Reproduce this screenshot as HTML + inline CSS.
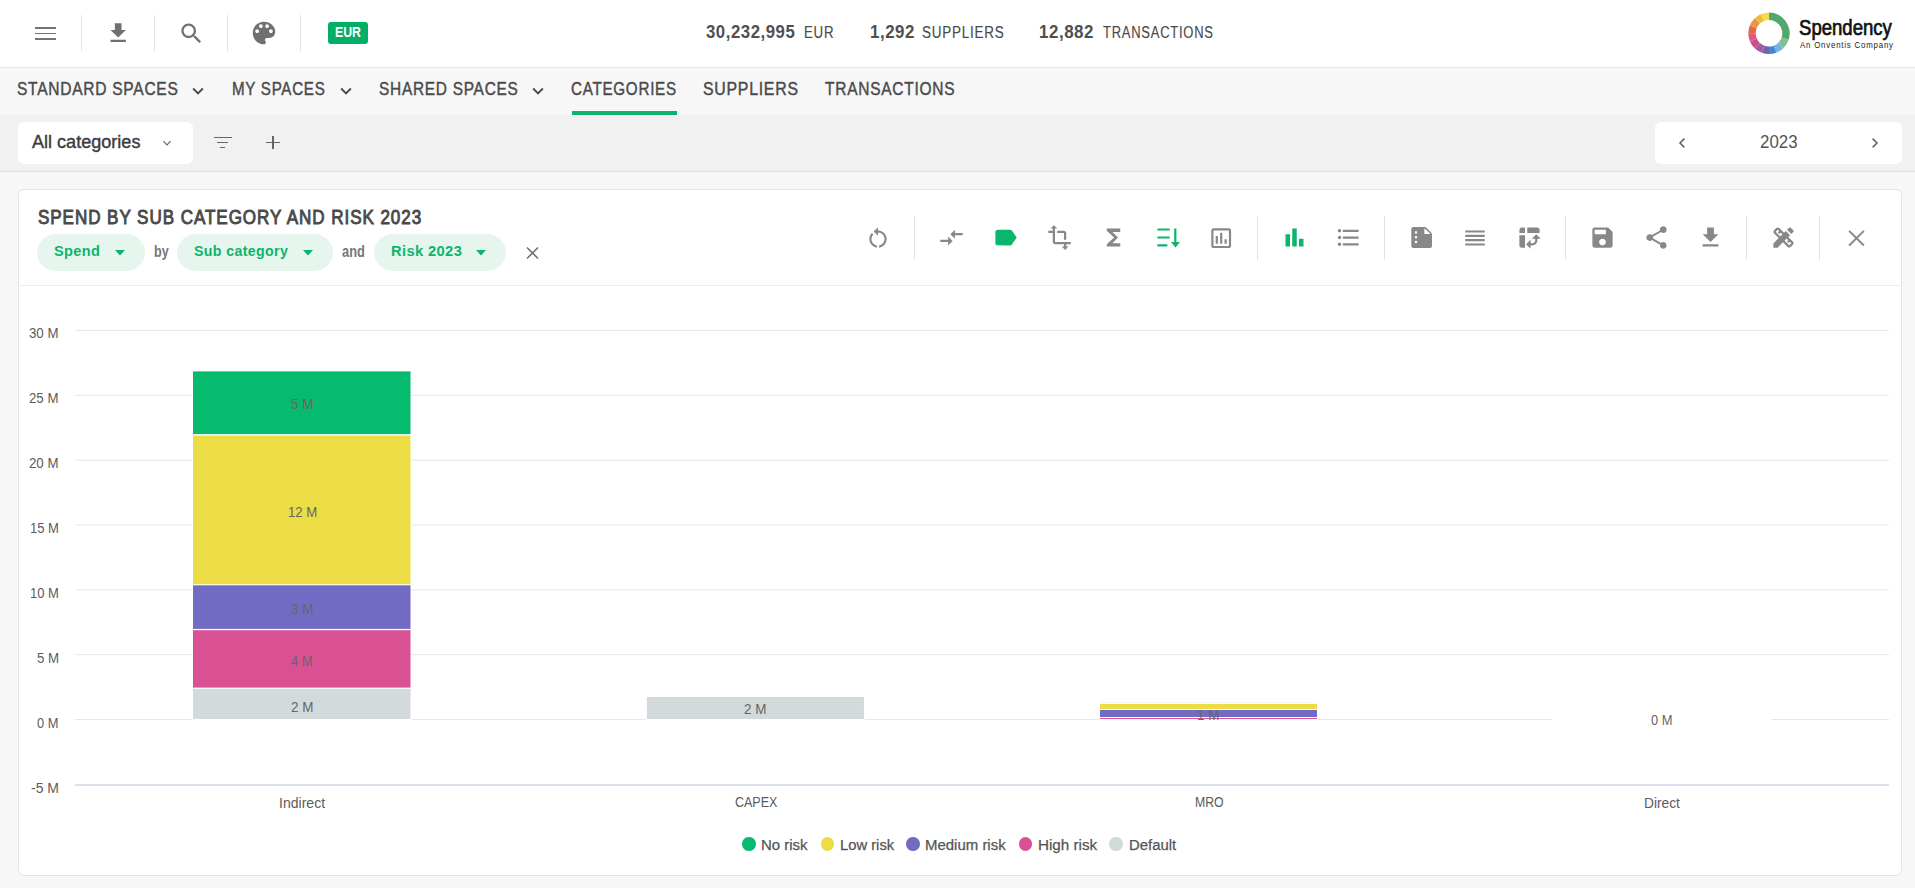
<!DOCTYPE html>
<html><head><meta charset="utf-8"><title>Spendency</title>
<style>
html,body{margin:0;padding:0;width:1915px;height:888px;overflow:hidden;background:#f5f5f5;}
body{position:relative;font-family:"Liberation Sans",sans-serif;}
.t{position:absolute;white-space:nowrap;transform-origin:0 0;}
.r{position:absolute;}
.i{position:absolute;overflow:visible;}

</style></head><body>
<div class="r" style="left:0px;top:0px;width:1915px;height:67px;background:#ffffff;"></div>
<div class="r" style="left:0px;top:67px;width:1915px;height:1px;background:#e6e6e6;"></div>
<div class="r" style="left:0px;top:68px;width:1915px;height:47px;background:#f7f7f7;"></div>
<div class="r" style="left:0px;top:115px;width:1915px;height:56px;background:#f1f1f1;"></div>
<div class="r" style="left:0px;top:171px;width:1915px;height:1px;background:#e2e2e2;"></div>
<div class="r" style="left:0px;top:172px;width:1915px;height:716px;background:#f7f7f7;"></div>
<div class="r" style="left:35.2px;top:27.1px;width:20.6px;height:1.8px;background:#737373;"></div>
<div class="r" style="left:35.2px;top:32.6px;width:20.6px;height:1.8px;background:#737373;"></div>
<div class="r" style="left:35.2px;top:38.1px;width:20.6px;height:1.8px;background:#737373;"></div>
<svg class="i" style="left:105.30px;top:20.30px;" width="26.4" height="26.4" viewBox="0 0 24 24"><path fill="#707070" d="M19 9h-4V3H9v6H5l7 7 7-7zM5 18v2h14v-2H5z"/></svg>
<svg class="i" style="left:177.50px;top:19.50px;" width="27" height="27" viewBox="0 0 24 24"><path fill="#707070" d="M15.5 14h-.79l-.28-.27C15.41 12.59 16 11.11 16 9.5 16 5.91 13.09 3 9.5 3S3 5.91 3 9.5 5.91 16 9.5 16c1.61 0 3.09-.59 4.23-1.57l.27.28v.79l5 4.99L20.49 19l-4.99-5zm-6 0C7.01 14 5 11.99 5 9.5S7.01 5 9.5 5 14 7.01 14 9.5 11.99 14 9.5 14z"/></svg>
<svg class="i" style="left:249.30px;top:18.20px;" width="30" height="30" viewBox="0 0 24 24"><path fill="#707070" d="M12 3c-4.97 0-9 4.03-9 9s4.03 9 9 9c.83 0 1.5-.67 1.5-1.5 0-.39-.15-.74-.39-1.01-.23-.26-.38-.61-.38-.99 0-.83.67-1.5 1.5-1.5H16c2.760 0 5-2.24 5-5 0-4.42-4.03-8-9-8zm-5.5 9c-.83 0-1.5-.67-1.5-1.5S5.67 9 6.5 9 8 9.67 8 10.5 7.330 12 6.5 12zm3-4C8.67 8 8 7.33 8 6.5S8.67 5 9.5 5s1.5.67 1.5 1.5S10.33 8 9.5 8zm5 0c-.83 0-1.5-.67-1.5-1.5S13.67 5 14.5 5s1.5.67 1.5 1.5S15.33 8 14.5 8zm3 4c-.83 0-1.5-.67-1.5-1.5S16.67 9 17.5 9s1.5.67 1.5 1.5-.67 1.5-1.5 1.5z"/></svg>
<div class="r" style="left:81px;top:15px;width:1px;height:36px;background:#e3e3e3;"></div>
<div class="r" style="left:154px;top:15px;width:1px;height:36px;background:#e3e3e3;"></div>
<div class="r" style="left:227px;top:15px;width:1px;height:36px;background:#e3e3e3;"></div>
<div class="r" style="left:300px;top:15px;width:1px;height:36px;background:#e3e3e3;"></div>
<div class="r" style="left:328px;top:22px;width:40px;height:22px;background:#03ae69;border-radius:3px;"></div>
<div class="t" style="left:335.20px;top:26.31px;font-size:13.81px;line-height:13.81px;color:#ffffff;font-weight:bold;transform:scaleX(0.8929);letter-spacing:0px;">EUR</div>
<div class="t" style="left:706.10px;top:21.88px;font-size:19.04px;line-height:19.04px;color:#505050;font-weight:bold;transform:scaleX(0.8821);letter-spacing:0.6px;">30,232,995</div>
<div class="t" style="left:804.20px;top:25.45px;font-size:15.77px;line-height:15.77px;color:#4a4a4a;transform:scaleX(0.8417);letter-spacing:0.9px;-webkit-text-stroke:0.15px #4a4a4a;">EUR</div>
<div class="t" style="left:870.20px;top:21.88px;font-size:19.04px;line-height:19.04px;color:#505050;font-weight:bold;transform:scaleX(0.8889);letter-spacing:0.6px;">1,292</div>
<div class="t" style="left:922.20px;top:25.45px;font-size:15.77px;line-height:15.77px;color:#4a4a4a;transform:scaleX(0.8528);letter-spacing:0.9px;-webkit-text-stroke:0.15px #4a4a4a;">SUPPLIERS</div>
<div class="t" style="left:1039.20px;top:21.88px;font-size:19.04px;line-height:19.04px;color:#505050;font-weight:bold;transform:scaleX(0.8905);letter-spacing:0.6px;">12,882</div>
<div class="t" style="left:1103.00px;top:25.45px;font-size:15.77px;line-height:15.77px;color:#4a4a4a;transform:scaleX(0.8243);letter-spacing:0.9px;-webkit-text-stroke:0.15px #4a4a4a;">TRANSACTIONS</div>
<svg class="i" style="left:0;top:0" width="1915" height="67"><path fill="#52a86b" d="M1769.00 12.60A20.7 20.7 0 0 1 1788.69 39.70L1781.65 37.41A13.3 13.3 0 0 0 1769.00 20.00Z"/><path fill="#80bf94" d="M1788.69 39.70A20.7 20.7 0 0 1 1783.38 48.19L1778.24 42.87A13.3 13.3 0 0 0 1781.65 37.41Z"/><path fill="#74b4e4" d="M1783.38 48.19A20.7 20.7 0 0 1 1776.42 52.63L1773.77 45.72A13.3 13.3 0 0 0 1778.24 42.87Z"/><path fill="#4187cc" d="M1776.42 52.63A20.7 20.7 0 0 1 1769.00 54.00L1769.00 46.60A13.3 13.3 0 0 0 1773.77 45.72Z"/><path fill="#6e64ad" d="M1769.00 54.00A20.7 20.7 0 0 1 1761.92 52.75L1764.45 45.80A13.3 13.3 0 0 0 1769.00 46.60Z"/><path fill="#a35aa0" d="M1761.92 52.75A20.7 20.7 0 0 1 1754.88 48.44L1759.93 43.03A13.3 13.3 0 0 0 1764.45 45.80Z"/><path fill="#cc4d8c" d="M1754.88 48.44A20.7 20.7 0 0 1 1749.95 41.39L1756.76 38.50A13.3 13.3 0 0 0 1759.93 43.03Z"/><path fill="#df5584" d="M1749.95 41.39A20.7 20.7 0 0 1 1748.30 33.30L1755.70 33.30A13.3 13.3 0 0 0 1756.76 38.50Z"/><path fill="#e06846" d="M1748.30 33.30A20.7 20.7 0 0 1 1749.81 25.55L1756.67 28.32A13.3 13.3 0 0 0 1755.70 33.30Z"/><path fill="#ec9645" d="M1749.81 25.55A20.7 20.7 0 0 1 1754.88 18.16L1759.93 23.57A13.3 13.3 0 0 0 1756.67 28.32Z"/><path fill="#ecbd3c" d="M1754.88 18.16A20.7 20.7 0 0 1 1761.25 14.11L1764.02 20.97A13.3 13.3 0 0 0 1759.93 23.57Z"/><path fill="#f2dd4a" d="M1761.25 14.11A20.7 20.7 0 0 1 1769.00 12.60L1769.00 20.00A13.3 13.3 0 0 0 1764.02 20.97Z"/></svg>
<div class="t" style="left:1799.20px;top:18.39px;font-size:21.51px;line-height:21.51px;color:#111111;transform:scaleX(0.8633);letter-spacing:0px;-webkit-text-stroke:0.7px #111111;">Spendency</div>
<div class="t" style="left:1800.00px;top:41.12px;font-size:8.72px;line-height:8.72px;color:#222222;transform:scaleX(0.8990);letter-spacing:0.9px;">An Onventis Company</div>
<div class="t" style="left:17.20px;top:80.00px;font-size:18.90px;line-height:18.90px;color:#4a4a4a;transform:scaleX(0.8222);letter-spacing:0.9px;-webkit-text-stroke:0.45px #4a4a4a;">STANDARD SPACES</div>
<div class="t" style="left:232.20px;top:80.00px;font-size:18.90px;line-height:18.90px;color:#4a4a4a;transform:scaleX(0.8020);letter-spacing:0.9px;-webkit-text-stroke:0.45px #4a4a4a;">MY SPACES</div>
<div class="t" style="left:378.92px;top:80.00px;font-size:18.90px;line-height:18.90px;color:#4a4a4a;transform:scaleX(0.8166);letter-spacing:0.9px;-webkit-text-stroke:0.45px #4a4a4a;">SHARED SPACES</div>
<div class="t" style="left:571.30px;top:80.00px;font-size:18.90px;line-height:18.90px;color:#4a4a4a;transform:scaleX(0.8049);letter-spacing:0.9px;-webkit-text-stroke:0.45px #4a4a4a;">CATEGORIES</div>
<div class="t" style="left:702.82px;top:80.00px;font-size:18.90px;line-height:18.90px;color:#4a4a4a;transform:scaleX(0.8384);letter-spacing:0.9px;-webkit-text-stroke:0.45px #4a4a4a;">SUPPLIERS</div>
<div class="t" style="left:825.00px;top:80.00px;font-size:18.90px;line-height:18.90px;color:#4a4a4a;transform:scaleX(0.8208);letter-spacing:0.9px;-webkit-text-stroke:0.45px #4a4a4a;">TRANSACTIONS</div>
<div class="r" style="left:572px;top:111px;width:105px;height:4px;background:#0db36c;"></div>
<svg class="i" style="left:187.20px;top:80.00px;" width="22" height="22" viewBox="0 0 24 24"><path fill="#4a4a4a" d="M7.41 8.59L12 13.17l4.59-4.58L18 10l-6 6-6-6 1.41-1.41z"/></svg>
<svg class="i" style="left:335.20px;top:80.00px;" width="22" height="22" viewBox="0 0 24 24"><path fill="#4a4a4a" d="M7.41 8.59L12 13.17l4.59-4.58L18 10l-6 6-6-6 1.41-1.41z"/></svg>
<svg class="i" style="left:527.40px;top:80.00px;" width="22" height="22" viewBox="0 0 24 24"><path fill="#4a4a4a" d="M7.41 8.59L12 13.17l4.59-4.58L18 10l-6 6-6-6 1.41-1.41z"/></svg>
<div class="r" style="left:18px;top:122px;width:175px;height:42px;background:#ffffff;border-radius:6px;"></div>
<div class="t" style="left:32.00px;top:133.09px;font-size:18.31px;line-height:18.31px;color:#3c3c3c;transform:scaleX(0.9871);letter-spacing:0px;-webkit-text-stroke:0.4px #3c3c3c;">All categories</div>
<svg class="i" style="left:162px;top:139px" width="10" height="8" viewBox="0 0 10 8"><path d="M1.4 2.2L5 5.8L8.6 2.2" fill="none" stroke="#666" stroke-width="1.2"/></svg>
<div class="r" style="left:214px;top:137px;width:17.5px;height:1.4px;background:#666;"></div>
<div class="r" style="left:217px;top:142px;width:11px;height:1.4px;background:#666;"></div>
<div class="r" style="left:220.3px;top:147px;width:4.6px;height:1.4px;background:#666;"></div>
<div class="r" style="left:266px;top:142px;width:13.6px;height:1.4px;background:#666;"></div>
<div class="r" style="left:272.2px;top:136px;width:1.4px;height:13.2px;background:#666;"></div>
<div class="r" style="left:1655px;top:122px;width:247px;height:42px;background:#ffffff;border-radius:6px;"></div>
<div class="t" style="left:1759.50px;top:133.12px;font-size:18.75px;line-height:18.75px;color:#555555;transform:scaleX(0.9016);letter-spacing:0px;">2023</div>
<svg class="i" style="left:1676px;top:136px" width="12" height="14" viewBox="0 0 12 14"><path d="M8.4 2.6L4 7L8.4 11.4" fill="none" stroke="#666" stroke-width="1.6"/></svg>
<svg class="i" style="left:1869px;top:136px" width="12" height="14" viewBox="0 0 12 14"><path d="M3.6 2.6L8 7L3.6 11.4" fill="none" stroke="#666" stroke-width="1.6"/></svg>
<div class="r" style="left:18px;top:189px;width:1884px;height:687px;background:#ffffff;border:1px solid #e4e4e4;border-radius:6px;box-sizing:border-box;"></div>
<div class="r" style="left:19px;top:285px;width:1882px;height:1px;background:#ececec;"></div>
<div class="t" style="left:37.78px;top:208.26px;font-size:19.77px;line-height:19.77px;color:#4a4a4a;transform:scaleX(0.8619);letter-spacing:1.1px;-webkit-text-stroke:0.95px #4a4a4a;">SPEND BY SUB CATEGORY AND RISK 2023</div>
<div class="r" style="left:37px;top:234px;width:108px;height:37px;background:#e6f6ee;border-radius:18.5px;"></div>
<div class="t" style="left:54.10px;top:242.90px;font-size:15.12px;line-height:15.12px;color:#0bb56c;font-weight:bold;transform:scaleX(0.9624);letter-spacing:0.4px;">Spend</div>
<svg class="i" style="left:115.4px;top:249.5px" width="10" height="6" viewBox="0 0 10 6"><path d="M0 0H10L5 5.5Z" fill="#0bb56c"/></svg>
<div class="t" style="left:153.60px;top:244.16px;font-size:15.99px;line-height:15.99px;color:#777777;font-weight:bold;transform:scaleX(0.7878);letter-spacing:0px;">by</div>
<div class="r" style="left:177px;top:234px;width:156px;height:37px;background:#e6f6ee;border-radius:18.5px;"></div>
<div class="t" style="left:194.20px;top:242.90px;font-size:15.12px;line-height:15.12px;color:#0bb56c;font-weight:bold;transform:scaleX(0.9366);letter-spacing:0.4px;">Sub category</div>
<svg class="i" style="left:303px;top:249.5px" width="10" height="6" viewBox="0 0 10 6"><path d="M0 0H10L5 5.5Z" fill="#0bb56c"/></svg>
<div class="t" style="left:342.00px;top:244.16px;font-size:15.99px;line-height:15.99px;color:#777777;font-weight:bold;transform:scaleX(0.8034);letter-spacing:0px;">and</div>
<div class="r" style="left:374px;top:234px;width:132px;height:37px;background:#e6f6ee;border-radius:18.5px;"></div>
<div class="t" style="left:391.00px;top:242.90px;font-size:15.12px;line-height:15.12px;color:#0bb56c;font-weight:bold;transform:scaleX(0.9708);letter-spacing:0.4px;">Risk 2023</div>
<svg class="i" style="left:475.7px;top:249.5px" width="10" height="6" viewBox="0 0 10 6"><path d="M0 0H10L5 5.5Z" fill="#0bb56c"/></svg>
<svg class="i" style="left:525px;top:246px" width="15" height="14" viewBox="0 0 15 14"><path d="M2 1.5L13 12.5M13 1.5L2 12.5" fill="none" stroke="#707070" stroke-width="1.6"/></svg>
<div class="r" style="left:914px;top:215.5px;width:1px;height:44px;background:#dde1e8;"></div>
<div class="r" style="left:1257px;top:215.5px;width:1px;height:44px;background:#dde1e8;"></div>
<div class="r" style="left:1384px;top:215.5px;width:1px;height:44px;background:#dde1e8;"></div>
<div class="r" style="left:1565px;top:215.5px;width:1px;height:44px;background:#dde1e8;"></div>
<div class="r" style="left:1746px;top:215.5px;width:1px;height:44px;background:#dde1e8;"></div>
<div class="r" style="left:1819px;top:215.5px;width:1px;height:44px;background:#dde1e8;"></div>
<svg class="i" style="left:865.30px;top:224.70px;" width="26" height="26" viewBox="0 0 24 24"><path fill="#888888" d="M12 5V2L8 6l4 4V7c3.31 0 6 2.69 6 6 0 2.97-2.17 5.43-5 5.91v2.02c3.95-.49 7-3.85 7-7.93 0-4.42-3.58-8-8-8zm-6 8c0-1.65.67-3.15 1.76-4.24L6.34 7.34C4.9 8.79 4 10.790 4 13c0 4.08 3.05 7.44 7 7.93v-2.02c-2.83-.48-5-2.94-5-5.91z"/></svg>
<svg class="i" style="left:938.00px;top:223.90px;" width="27" height="27" viewBox="0 0 24 24"><path fill="#888888" d="M9.01 14H2v2h7.01v3L13 15l-3.99-4v3zm5.98-1v-3H22V8h-7.01V5L11 9l3.99 4z"/></svg>
<svg class="i" style="left:991.70px;top:223.90px;" width="27" height="27" viewBox="0 0 24 24"><path fill="#0bb56c" d="M17.63 5.84C17.27 5.33 16.67 5 16 5L5 5.01C3.9 5.01 3 5.9 3 7v10c0 1.1.9 1.99 2 1.99L16 19c.67 0 1.27-.33 1.63-.84L22 12l-4.37-6.16z"/></svg>
<svg class="i" style="left:1046.10px;top:224.00px;" width="27" height="27" viewBox="0 0 24 24"><path fill="#888888" d="M22 18v-2H8V4h2L7 1 4 4h2v2H2v2h4v8c0 1.1.9 2 2 2h8v2h-2l3 3 3-3h-2v-2h4zM10 8h6v6h2V8c0-1.1-.9-2-2-2h-6v2z"/></svg>
<svg class="i" style="left:1100.00px;top:223.90px;" width="27" height="27" viewBox="0 0 24 24"><path fill="#888888" d="M18 4H6v2l6.5 6L6 18v2h12v-3h-7l5-5-5-5h7z"/></svg>
<svg class="i" style="left:1150px;top:220px" width="40" height="35" viewBox="1150 220 40 35"><g fill="#0bb56c"><rect x="1157.2" y="228.4" width="12.7" height="2.2" rx="1"/><rect x="1157.2" y="236.4" width="12.7" height="2.2" rx="1"/><rect x="1157.2" y="244.2" width="10.3" height="2.2" rx="1"/><rect x="1174.2" y="228.5" width="2.2" height="14"/><path d="M1171 241.9H1180L1175.5 247.6Z"/></g></svg>
<svg class="i" style="left:1208.30px;top:224.50px;" width="26.4" height="26.4" viewBox="0 0 24 24"><path fill="#888888" d="M9 17H7v-7h2v7zm4 0h-2V7h2v10zm4 0h-2v-4h2v4zm2 2H5V5h14v14zm0-16H5c-1.1 0-2 .9-2 2v14c0 1.1.9 2 2 2h14c1.1 0 2-.9 2-2V5c0-1.1-.9-2-2-2z"/></svg>
<svg class="i" style="left:1281.00px;top:224.00px;" width="27" height="27" viewBox="0 0 24 24"><path fill="#0bb56c" d="M4 9h4v11H4zm12 4h4v7h-4zm-6-9h4v16h-4z"/></svg>
<svg class="i" style="left:1335.00px;top:224.00px;" width="27" height="27" viewBox="0 0 24 24"><path fill="#888888" d="M4 10.5c-.83 0-1.5.67-1.5 1.5s.67 1.5 1.5 1.5 1.5-.67 1.5-1.5-.67-1.5-1.5-1.5zm0-6c-.83 0-1.5.67-1.5 1.5S3.17 7.5 4 7.5 5.5 6.83 5.5 6 4.83 4.5 4 4.5zm0 12c-.83 0-1.5.68-1.5 1.5s.68 1.5 1.5 1.5 1.5-.68 1.5-1.5-.67-1.5-1.5-1.5zM7 19h14v-2H7v2zm0-6h14v-2H7v2zm0-8v2h14V5H7z"/></svg>
<svg class="i" style="left:1405px;top:222px" width="32" height="32" viewBox="1405 222 32 32"><path fill="#888888" d="M1413.3 227H1425.6L1432 233.4V246C1432 247.1 1431.1 248 1430 248H1413.3C1412.2 248 1411.3 247.1 1411.3 246V229C1411.3 227.9 1412.2 227 1413.3 227Z"/><path fill="#fff" d="M1424.4 228.2V233.9H1430.6Z"/><rect fill="#fff" x="1414.9" y="231.3" width="2.2" height="2.2"/><rect fill="#fff" x="1414.9" y="236.1" width="2.2" height="2.2"/><rect fill="#fff" x="1414.9" y="240.9" width="2.2" height="2.2"/></svg>
<svg class="i" style="left:1462.40px;top:224.70px;" width="26" height="26" viewBox="0 0 24 24"><path fill="#888888" d="M3 15h18v-2H3v2zm0 4h18v-2H3v2zm0-8h18V9H3v2zm0-6v2h18V5H3z"/></svg>
<svg class="i" style="left:1516.10px;top:224.30px;" width="27" height="27" viewBox="0 0 24 24"><path fill="#888888" d="M10 8h11V5c0-1.1-.9-2-2-2h-9v5zM3 8h5V3H5c-1.1 0-2 .9-2 2v3zm2 13h3V10H3v9c0 1.1.9 2 2 2zm8 1l-4-4 4-4zm1-9l4-4 4 4zm.58 6H13v-2h1.58c1.33 0 2.42-1.08 2.42-2.42V13h2v1.58c0 2.44-1.98 4.42-4.42 4.42z"/></svg>
<svg class="i" style="left:1589.00px;top:224.00px;" width="27" height="27" viewBox="0 0 24 24"><path fill="#888888" d="M17 3H5c-1.11 0-2 .9-2 2v14c0 1.1.89 2 2 2h14c1.1 0 2-.9 2-2V7l-4-4zm-5 16c-1.66 0-3-1.34-3-3s1.34-3 3-3 3 1.34 3 3-1.34 3-3 3zm3-10H5V5h10v4z"/></svg>
<svg class="i" style="left:1643.00px;top:223.80px;" width="27" height="27" viewBox="0 0 24 24"><path fill="#888888" d="M18 16.08c-.76 0-1.44.3-1.96.77L8.91 12.7c.05-.23.09-.46.09-.7s-.04-.47-.09-.7l7.05-4.11c.54.5 1.25.81 2.04.81 1.66 0 3-1.34 3-3s-1.34-3-3-3-3 1.34-3 3c0 .24.04.47.09.7L8.04 9.81C7.5 9.31 6.79 9 6 9c-1.66 0-3 1.34-3 3s1.34 3 3 3c.79 0 1.5-.31 2.04-.81l7.12 4.16c-.05.21-.08.43-.08.65 0 1.61 1.31 2.92 2.92 2.92 1.61 0 2.92-1.31 2.92-2.92s-1.31-2.92-2.920-2.92z"/></svg>
<svg class="i" style="left:1697.00px;top:223.80px;" width="27" height="27" viewBox="0 0 24 24"><path fill="#888888" d="M19 9h-4V3H9v6H5l7 7 7-7zM5 18v2h14v-2H5z"/></svg>
<svg class="i" style="left:1769.80px;top:224.10px;" width="27" height="27" viewBox="0 0 24 24"><path fill="#888888" d="M16.24 11.51l1.57-1.57-3.75-3.75-1.57 1.56-4.14-4.13c-.78-.78-2.05-.78-2.83 0l-1.9 1.9c-.78.78-.78 2.05 0 2.83l4.13 4.13L3 17.25V21h3.75l4.76-4.76 4.13 4.13c.95.95 2.23.6 2.83 0l1.9-1.9c.78-.78.78-2.05 0-2.830l-4.13-4.12zm-7.06-.44L5.04 6.94l1.89-1.9L8.2 6.31 7.02 7.5l1.41 1.41 1.19-1.19 1.45 1.45-1.89 1.9zm7.88 7.89l-4.13-4.14 1.9-1.9 1.45 1.45-1.19 1.19 1.41 1.41 1.19-1.19 1.27 1.27-1.9 1.91zM20.71 7.04c.39-.39.39-1.02 0-1.41l-2.34-2.34c-.47-.47-1.12-.29-1.41 0l-1.83 1.83 3.75 3.75 1.83-1.83z"/></svg>
<svg class="i" style="left:1846px;top:227.5px" width="20" height="20" viewBox="0 0 20 20"><path d="M3.1 2.8L17.9 17.5M17.9 2.8L3.1 17.5" fill="none" stroke="#888888" stroke-width="1.9"/></svg>
<svg class="i" style="left:0;top:0" width="1915" height="888"><rect x="75" y="330.00" width="1814" height="1" fill="#e6e6e6"/><rect x="75" y="394.83" width="1814" height="1" fill="#e6e6e6"/><rect x="75" y="459.66" width="1814" height="1" fill="#e6e6e6"/><rect x="75" y="524.49" width="1814" height="1" fill="#e6e6e6"/><rect x="75" y="589.32" width="1814" height="1" fill="#e6e6e6"/><rect x="75" y="654.15" width="1814" height="1" fill="#e6e6e6"/><rect x="75" y="718.98" width="1814" height="1" fill="#e6e6e6"/><rect x="75" y="784.2" width="1814" height="1.6" fill="#d3dbea"/></svg>
<div class="t" style="left:29.30px;top:325.69px;font-size:14.53px;line-height:14.53px;color:#5c5c5c;transform:scaleX(0.9124);letter-spacing:0px;">30 M</div>
<div class="t" style="left:29.30px;top:390.69px;font-size:14.53px;line-height:14.53px;color:#5c5c5c;transform:scaleX(0.9124);letter-spacing:0px;">25 M</div>
<div class="t" style="left:29.30px;top:455.69px;font-size:14.53px;line-height:14.53px;color:#5c5c5c;transform:scaleX(0.9124);letter-spacing:0px;">20 M</div>
<div class="t" style="left:29.80px;top:520.69px;font-size:14.53px;line-height:14.53px;color:#5c5c5c;transform:scaleX(0.8976);letter-spacing:0px;">15 M</div>
<div class="t" style="left:29.80px;top:585.69px;font-size:14.53px;line-height:14.53px;color:#5c5c5c;transform:scaleX(0.8976);letter-spacing:0px;">10 M</div>
<div class="t" style="left:36.70px;top:650.69px;font-size:14.53px;line-height:14.53px;color:#5c5c5c;transform:scaleX(0.9123);letter-spacing:0px;">5 M</div>
<div class="t" style="left:37.30px;top:715.69px;font-size:14.53px;line-height:14.53px;color:#5c5c5c;transform:scaleX(0.8848);letter-spacing:0px;">0 M</div>
<div class="t" style="left:30.80px;top:780.69px;font-size:14.53px;line-height:14.53px;color:#5c5c5c;transform:scaleX(0.9636);letter-spacing:0px;">-5 M</div>
<svg class="i" style="left:0;top:0" width="1915" height="888"><rect x="192" y="370.4" width="219.5" height="349.6" fill="#fff"/><rect x="193" y="371.4" width="217.5" height="62.70" fill="#06ba6e"/><rect x="193" y="435.6" width="217.5" height="148.60" fill="#ecdc46"/><rect x="193" y="585.3" width="217.5" height="43.60" fill="#726bc4"/><rect x="193" y="630.2" width="217.5" height="57.40" fill="#d95193"/><rect x="193" y="688.8" width="217.5" height="30.20" fill="#d3dadb"/><rect x="645.9" y="696" width="219" height="24" fill="#fff"/><rect x="646.9" y="697" width="217" height="22.00" fill="#d3dadb"/><rect x="1099" y="701" width="219" height="19" fill="#fff"/><rect x="1100" y="702" width="217" height="1.00" fill="#eef9f3"/><rect x="1100" y="704" width="217" height="5.00" fill="#ecdc46"/><rect x="1100" y="710" width="217" height="7.00" fill="#726bc4"/><rect x="1100" y="718" width="217" height="1.00" fill="#d95193"/><rect x="1552" y="719" width="219.6" height="1" fill="#fff"/></svg>
<div class="t" style="left:290.58px;top:396.69px;font-size:14.53px;line-height:14.53px;color:#666666;transform:scaleX(0.9261);letter-spacing:0px;">5 M</div>
<div class="t" style="left:287.51px;top:504.69px;font-size:14.53px;line-height:14.53px;color:#666666;transform:scaleX(0.9081);letter-spacing:0px;">12 M</div>
<div class="t" style="left:290.58px;top:602.19px;font-size:14.53px;line-height:14.53px;color:#666666;transform:scaleX(0.9261);letter-spacing:0px;">3 M</div>
<div class="t" style="left:291.38px;top:654.19px;font-size:14.53px;line-height:14.53px;color:#666666;transform:scaleX(0.8884);letter-spacing:0px;">4 M</div>
<div class="t" style="left:290.58px;top:700.19px;font-size:14.53px;line-height:14.53px;color:#666666;transform:scaleX(0.9261);letter-spacing:0px;">2 M</div>
<div class="t" style="left:743.88px;top:701.69px;font-size:14.53px;line-height:14.53px;color:#666666;transform:scaleX(0.9261);letter-spacing:0px;">2 M</div>
<div class="t" style="left:1196.98px;top:707.69px;font-size:14.53px;line-height:14.53px;color:#666666;transform:scaleX(0.9261);letter-spacing:0px;">1 M</div>
<div class="t" style="left:1651.28px;top:712.69px;font-size:14.53px;line-height:14.53px;color:#666666;transform:scaleX(0.8884);letter-spacing:0px;">0 M</div>
<div class="t" style="left:278.70px;top:795.89px;font-size:14.53px;line-height:14.53px;color:#5c5c5c;transform:scaleX(0.9687);letter-spacing:0px;">Indirect</div>
<div class="t" style="left:734.50px;top:794.89px;font-size:14.53px;line-height:14.53px;color:#5c5c5c;transform:scaleX(0.8609);letter-spacing:0px;">CAPEX</div>
<div class="t" style="left:1194.70px;top:794.89px;font-size:14.53px;line-height:14.53px;color:#5c5c5c;transform:scaleX(0.8460);letter-spacing:0px;">MRO</div>
<div class="t" style="left:1643.70px;top:795.89px;font-size:14.53px;line-height:14.53px;color:#5c5c5c;transform:scaleX(0.9473);letter-spacing:0px;">Direct</div>
<div class="r" style="left:742.3px;top:837.3px;width:13.4px;height:13.4px;border-radius:50%;background:#06ba6e"></div>
<div class="r" style="left:820.5999999999999px;top:837.3px;width:13.4px;height:13.4px;border-radius:50%;background:#ecdc46"></div>
<div class="r" style="left:906.3px;top:837.3px;width:13.4px;height:13.4px;border-radius:50%;background:#726bc4"></div>
<div class="r" style="left:1019.0999999999999px;top:837.3px;width:13.4px;height:13.4px;border-radius:50%;background:#d95193"></div>
<div class="r" style="left:1109.3px;top:837.3px;width:13.4px;height:13.4px;border-radius:50%;background:#d3dadb"></div>
<div class="t" style="left:761.20px;top:838.49px;font-size:14.53px;line-height:14.53px;color:#555555;transform:scaleX(1.0294);letter-spacing:0px;-webkit-text-stroke:0.25px #555555;">No risk</div>
<div class="t" style="left:839.50px;top:838.49px;font-size:14.53px;line-height:14.53px;color:#555555;transform:scaleX(1.0173);letter-spacing:0px;-webkit-text-stroke:0.25px #555555;">Low risk</div>
<div class="t" style="left:925.20px;top:838.49px;font-size:14.53px;line-height:14.53px;color:#555555;transform:scaleX(1.0311);letter-spacing:0px;-webkit-text-stroke:0.25px #555555;">Medium risk</div>
<div class="t" style="left:1037.50px;top:838.49px;font-size:14.53px;line-height:14.53px;color:#555555;transform:scaleX(1.0476);letter-spacing:0px;-webkit-text-stroke:0.25px #555555;">High risk</div>
<div class="t" style="left:1128.50px;top:838.49px;font-size:14.53px;line-height:14.53px;color:#555555;transform:scaleX(1.0244);letter-spacing:0px;-webkit-text-stroke:0.25px #555555;">Default</div>
</body></html>
